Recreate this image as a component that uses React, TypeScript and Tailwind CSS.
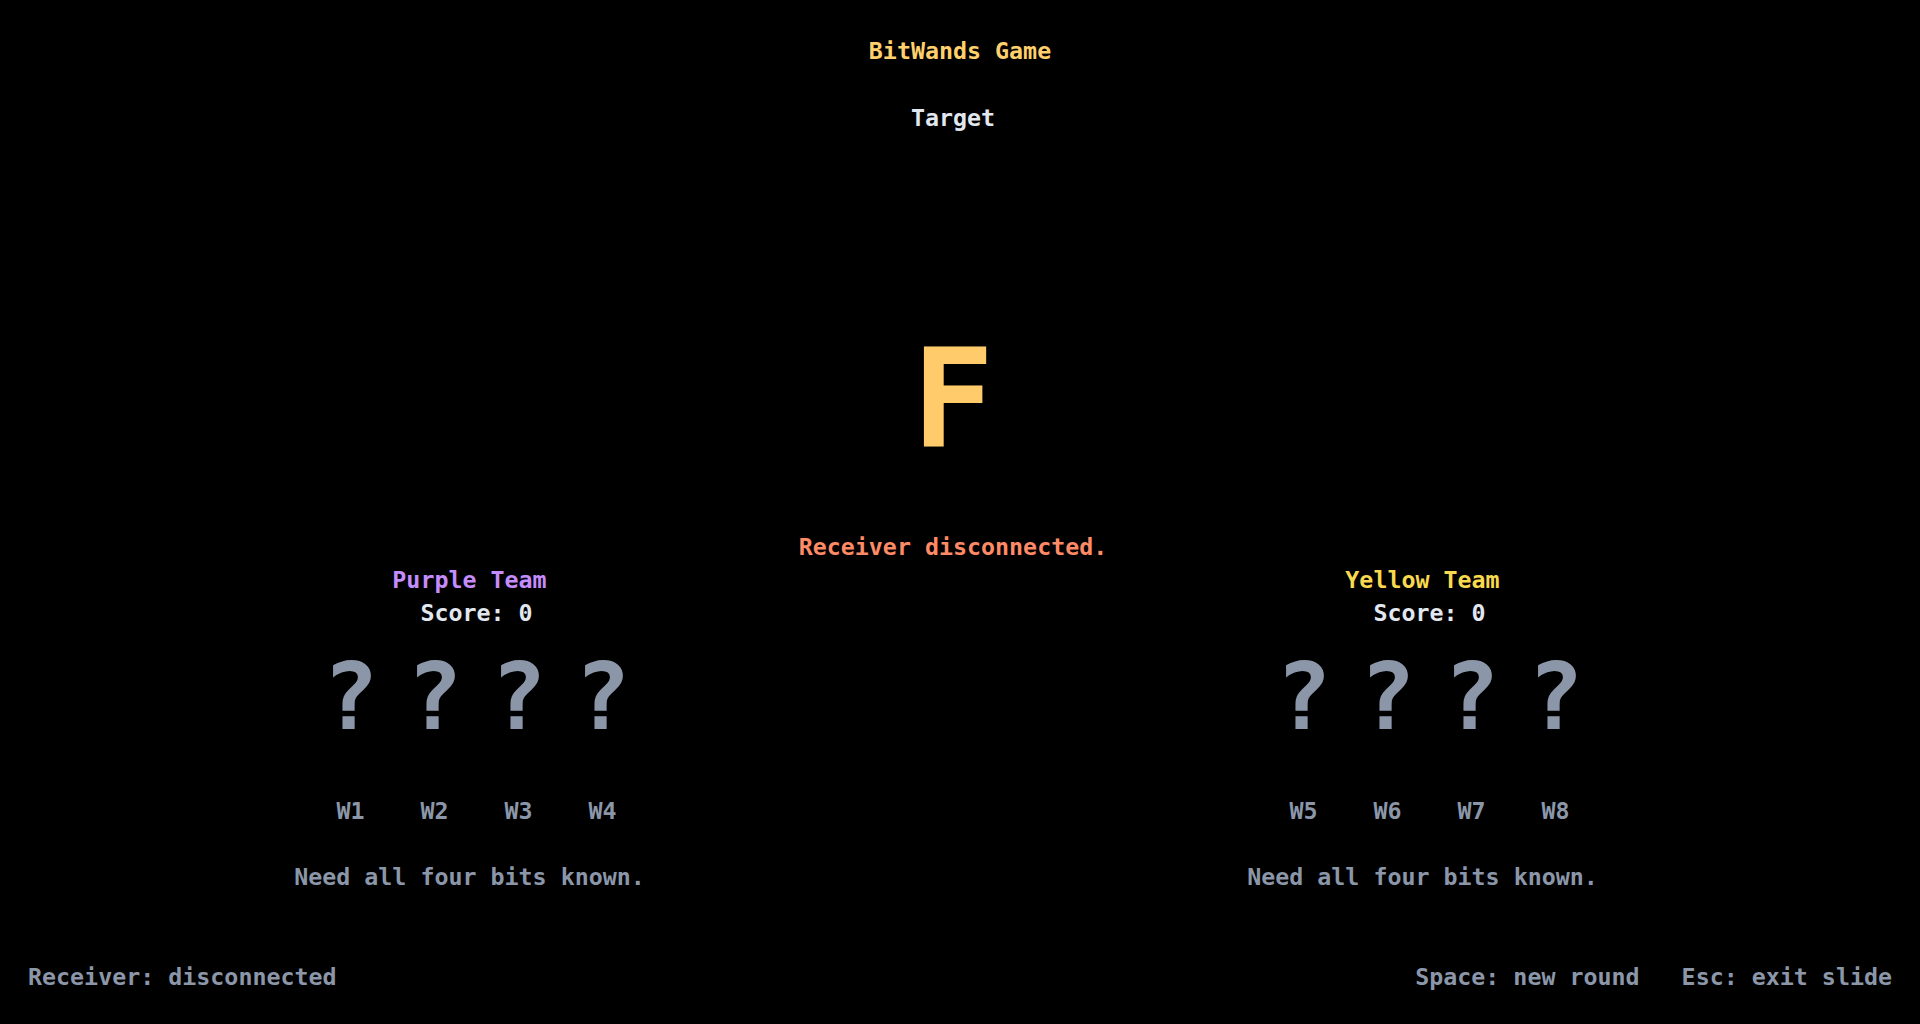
import React from 'react';

type Team = {
  name: string;
  color: string;
  score: number;
  wands: string[];
};

const TEAMS: Team[] = [
  { name: 'Purple Team', color: 'text-[#c48cfc]', score: 0, wands: ['W1', 'W2', 'W3', 'W4'] },
  { name: 'Yellow Team', color: 'text-[#f9d94e]', score: 0, wands: ['W5', 'W6', 'W7', 'W8'] },
];

function TeamPanel({ team }: { team: Team }) {
  return (
    <div className="flex flex-col items-center">
      <div className={`pr-[14px] leading-[27px] ${team.color}`}>{team.name}</div>
      <div className="mt-[6px] leading-[27px] text-[#e2e8f0]">Score: {team.score}</div>

      {/* bits, unknown until the receiver reports */}
      <div className="mt-[25px] flex gap-[14px]">
        {team.wands.map((w) => (
          <div key={w} className="flex w-[70px] flex-col items-center">
            <span className="text-[93px] leading-[92px] text-[#8b97a9]">?</span>
            <span className="mt-[54px] leading-[27px] text-[#8b97a9]">{w}</span>
          </div>
        ))}
      </div>

      <div className="mt-[39px] pr-[14px] leading-[27px] text-[#8b97a9]">Need all four bits known.</div>
    </div>
  );
}

export default function App() {
  return (
    <div
      className="flex h-screen flex-col bg-black text-[23.3px] font-bold"
      style={{ fontFamily: '"DejaVu Sans Mono", "Liberation Mono", monospace' }}
    >
      <header className="pt-[37px] text-center leading-[27px] text-[#ffd06b]">BitWands Game</header>

      <main className="flex flex-col items-center pr-[14px]">
        <div className="mt-[40px] leading-[27px] text-[#e2e8f0]">Target</div>
        <div className="mt-[200px] text-[137px] leading-[137px] text-[#ffcb6b]">F</div>
        <div className="mt-[65px] leading-[27px] text-[#ff8a66]">Receiver disconnected.</div>

        <div className="mt-[6px] grid w-full grid-cols-2">
          {TEAMS.map((t) => (
            <TeamPanel key={t.name} team={t} />
          ))}
        </div>
      </main>

      <footer className="mt-auto flex justify-between px-[28px] pb-[34px] leading-[27px] text-[#8b97a9]">
        <span>Receiver: disconnected</span>
        <span className="flex gap-[42px]">
          <span>Space: new round</span>
          <span>Esc: exit slide</span>
        </span>
      </footer>
    </div>
  );
}
